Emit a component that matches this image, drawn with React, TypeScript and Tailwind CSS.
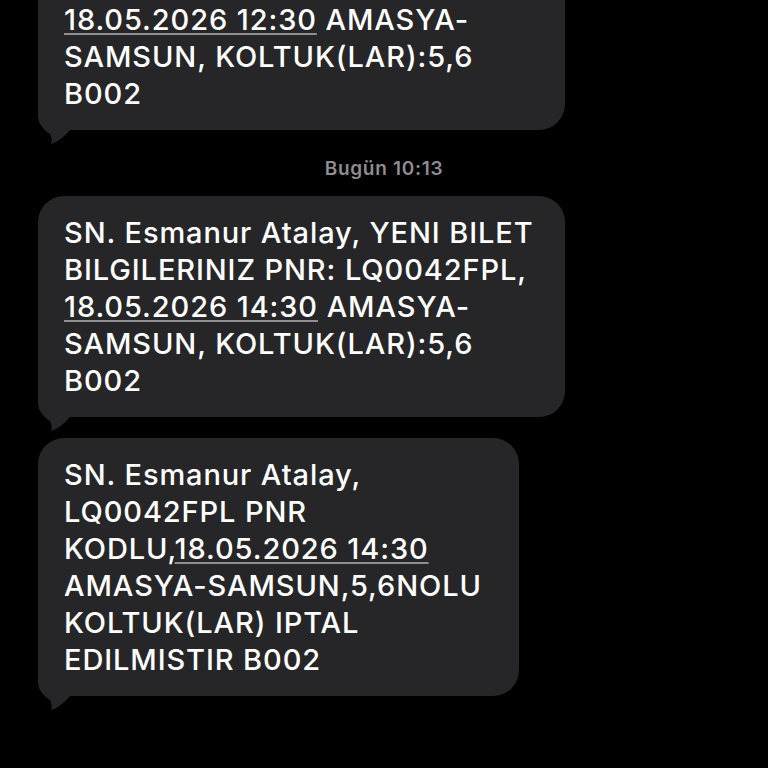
import React from "react";

const Tail = () => (
  <svg
    className="absolute left-0 bottom-[-14px]"
    width="40"
    height="40"
    viewBox="0 0 40 40"
  >
    <path
      d="M0 0 L0 12 C0 20 6 26 12 30 C14 34 14 37 13 40 C20 38 27 32 32 26 L40 26 L40 0 Z"
      fill="#262628"
    />
  </svg>
);

const Date = ({ children }: { children: React.ReactNode }) => (
  <span className="underline decoration-[#8e8e93] decoration-2 underline-offset-[3px]">
    {children}
  </span>
);

const Bubble = ({ children, className = "" }: { children: React.ReactNode; className?: string }) => (
  <div className={`relative bg-[#262628] rounded-[26px] pl-[26px] pr-[10px] py-[18px] ${className}`}>
    <div className="relative z-10 text-white text-[29px] leading-[37px] font-medium tracking-[0.9px] whitespace-nowrap font-[Inter,'Liberation_Sans',sans-serif]">
      {children}
    </div>
    <Tail />
  </div>
);

export default function App() {
  return (
    <div className="w-[768px] h-[768px] bg-black overflow-hidden flex flex-col pl-[38px]">
      <Bubble className="w-[527px] mt-[-91px]">
        SN. Esmanur Atalay, YENI BILET
        <br />
        BILGILERINIZ PNR: LQ0042FPL,
        <br />
        <Date>18.05.2026 12:30</Date> AMASYA-
        <br />
        SAMSUN, KOLTUK(LAR):5,6
        <br />
        B002
      </Bubble>

      <div className="w-[692px] flex justify-center pt-[27px] pb-[15px] text-[19px] leading-[24px] font-semibold tracking-[0.7px] text-[#8d8d92] font-[Inter,'Liberation_Sans',sans-serif]">
        Bugün 10:13
      </div>

      <Bubble className="w-[527px]">
        SN. Esmanur Atalay, YENI BILET
        <br />
        BILGILERINIZ PNR: LQ0042FPL,
        <br />
        <Date>18.05.2026 14:30</Date> AMASYA-
        <br />
        SAMSUN, KOLTUK(LAR):5,6
        <br />
        B002
      </Bubble>

      <Bubble className="w-[481px] mt-[21px]">
        SN. Esmanur Atalay,
        <br />
        LQ0042FPL PNR
        <br />
        KODLU,<Date>18.05.2026 14:30</Date>
        <br />
        AMASYA-SAMSUN,5,6NOLU
        <br />
        KOLTUK(LAR) IPTAL
        <br />
        EDILMISTIR B002
      </Bubble>
    </div>
  );
}
